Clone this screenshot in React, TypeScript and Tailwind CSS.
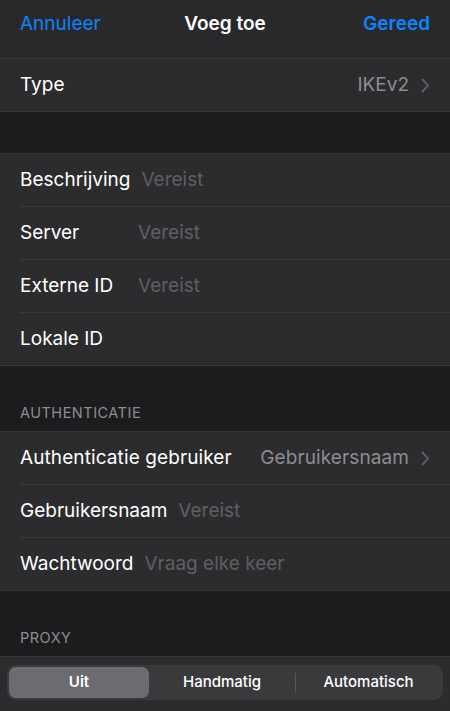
import React from 'react';

const font = { fontFamily: 'Inter, "Noto Sans", sans-serif' };

const Chevron = () => (
  <svg width="9" height="15" viewBox="0 0 9 15" className="ml-[12px]">
    <path d="M1.5 1.5 L7 7.5 L1.5 13.5" fill="none" stroke="#5b5b60" strokeWidth="2" strokeLinecap="round" strokeLinejoin="round" />
  </svg>
);

const FieldRow = ({ label, placeholder, last, minW }: { label: string; placeholder?: string; last?: boolean; minW?: boolean }) => (
  <div className="pl-[20px]">
    <div className={`flex items-center pr-[20px] ${last ? 'h-[52px]' : 'h-[53px] border-b border-[#3a3a3d]'}`}>
      <span className={`text-white text-[19px] ${minW ? 'min-w-[107px]' : ''}`}>{label}</span>
      {placeholder && <span className="ml-[11px] text-[#5f5f63] text-[19px]">{placeholder}</span>}
    </div>
  </div>
);

const SectionHeader = ({ title }: { title: string }) => (
  <div className="h-[65px] flex items-end pb-[7px] px-[20px] text-[14.5px] text-[#8d8d92] tracking-[0.5px]">{title}</div>
);

export default function App() {
  return (
    <div style={font} className="w-[450px] h-[711px] overflow-hidden bg-[#1c1c1e]">
      {/* Navigation bar */}
      <div className="h-[59px] bg-[#29292b] border-b border-[#38383b] flex items-start pt-[10px] justify-between px-[20px] relative">
        <span className="text-[#0a84ff] text-[19px]">Annuleer</span>
        <span className="absolute left-0 right-0 top-[10px] text-center text-white text-[19px] font-semibold pointer-events-none">Voeg toe</span>
        <span className="text-[#0a84ff] text-[19px] font-semibold">Gereed</span>
      </div>

      {/* Type */}
      <div className="h-[53px] bg-[#2c2c2e] border-b border-[#38383b] flex items-center justify-between px-[20px]">
        <span className="text-white text-[19px]">Type</span>
        <div className="flex items-center">
          <span className="text-[#8d8d92] text-[19px]">IKEv2</span>
          <Chevron />
        </div>
      </div>

      <div className="h-[41px]" />

      {/* General fields */}
      <div className="bg-[#2c2c2e] border-y border-[#38383b]">
        <FieldRow label="Beschrijving" placeholder="Vereist" minW />
        <FieldRow label="Server" placeholder="Vereist" minW />
        <FieldRow label="Externe ID" placeholder="Vereist" minW />
        <FieldRow label="Lokale ID" last />
      </div>

      <SectionHeader title="AUTHENTICATIE" />

      <div className="bg-[#2c2c2e] border-y border-[#38383b]">
        <div className="pl-[20px]">
          <div className="h-[53px] flex items-center justify-between pr-[20px] border-b border-[#3a3a3d]">
            <span className="text-white text-[19px] tracking-[0.1px]">Authenticatie gebruiker</span>
            <div className="flex items-center">
              <span className="text-[#8d8d92] text-[19px] tracking-[0.1px]">Gebruikersnaam</span>
              <Chevron />
            </div>
          </div>
        </div>
        <FieldRow label="Gebruikersnaam" placeholder="Vereist" />
        <FieldRow label="Wachtwoord" placeholder="Vraag elke keer" last />
      </div>

      <SectionHeader title="PROXY" />

      <div className="bg-[#2c2c2e] border-t border-[#38383b] pt-[8px] px-[7px] h-[60px]">
        <div className="h-[35px] rounded-[9px] bg-[#3a3a3d] p-[2px] flex items-center">
          <div className="w-[140px] h-full rounded-[7px] bg-[#6b6b70] flex items-center justify-center text-white text-[15px] font-semibold">Uit</div>
          <div className="flex-1 h-full flex items-center justify-center text-white text-[15px] font-medium">Handmatig</div>
          <div className="w-px h-[19px] bg-[#58585c]" />
          <div className="w-[145px] h-full flex items-center justify-center text-white text-[15px] font-medium">Automatisch</div>
        </div>
      </div>
    </div>
  );
}
